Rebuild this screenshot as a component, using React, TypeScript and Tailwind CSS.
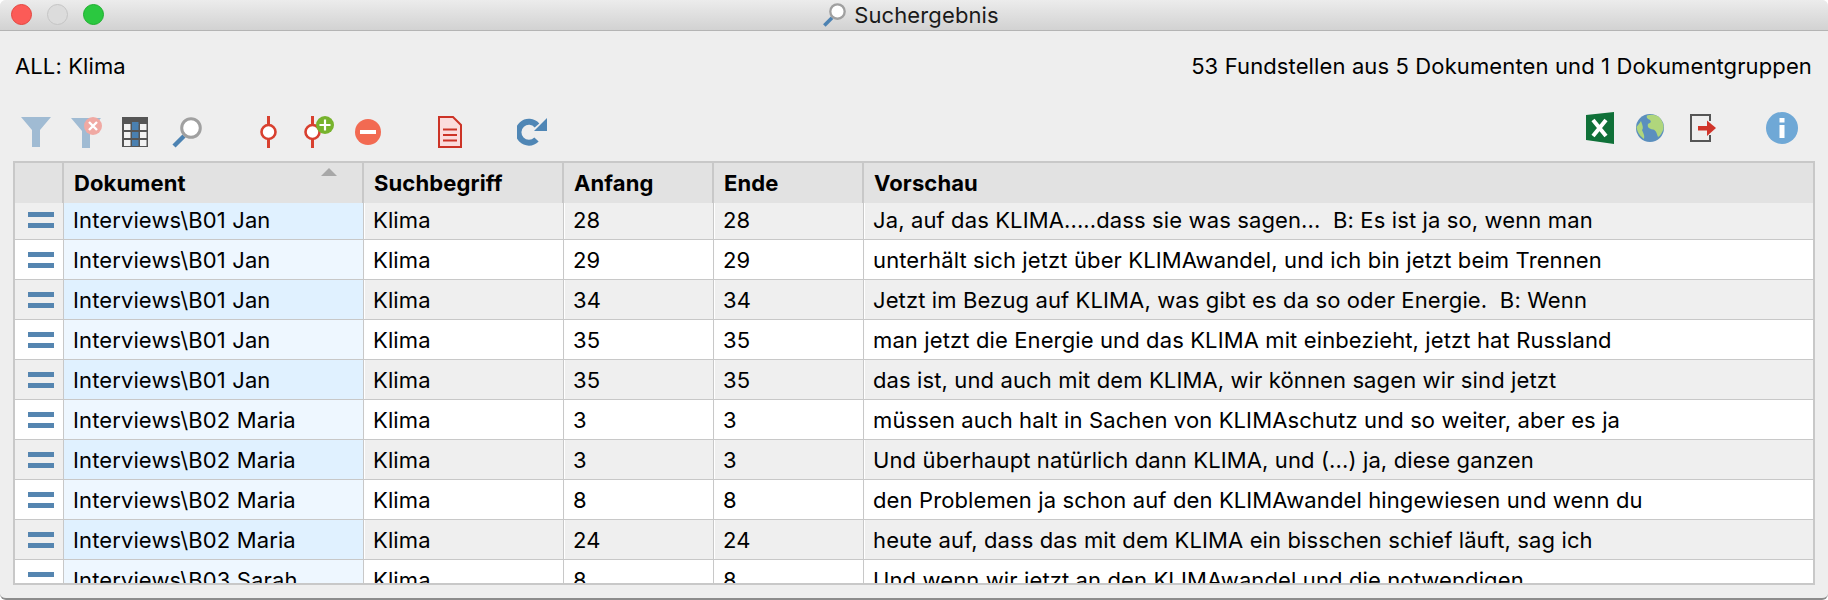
const rows = [
  ["Interviews\\B01 Jan", "28", "Ja, auf das KLIMA.....dass sie was sagen...  B: Es ist ja so, wenn man"],
  ["Interviews\\B01 Jan", "29", "unterhält sich jetzt über KLIMAwandel, und ich bin jetzt beim Trennen"],
  ["Interviews\\B01 Jan", "34", "Jetzt im Bezug auf KLIMA, was gibt es da so oder Energie.  B: Wenn"],
  ["Interviews\\B01 Jan", "35", "man jetzt die Energie und das KLIMA mit einbezieht, jetzt hat Russland"],
  ["Interviews\\B01 Jan", "35", "das ist, und auch mit dem KLIMA, wir können sagen wir sind jetzt"],
  ["Interviews\\B02 Maria", "3", "müssen auch halt in Sachen von KLIMAschutz und so weiter, aber es ja"],
  ["Interviews\\B02 Maria", "3", "Und überhaupt natürlich dann KLIMA, und (...) ja, diese ganzen"],
  ["Interviews\\B02 Maria", "8", "den Problemen ja schon auf den KLIMAwandel hingewiesen und wenn du"],
  ["Interviews\\B02 Maria", "24", "heute auf, dass das mit dem KLIMA ein bisschen schief läuft, sag ich"],
  ["Interviews\\B03 Sarah", "8", "Und wenn wir jetzt an den KLIMAwandel und die notwendigen"],
];

const cols = "grid grid-cols-[49px_300px_200px_150px_150px_1fr]";

function Funnel() {
  return (
    <svg width="30" height="30" viewBox="0 0 30 30">
      <polygon points="0,0 30,0 19,13 19,30 11,30 11,13" fill="#a0bbd3" />
    </svg>
  );
}

function FunnelX() {
  return (
    <svg width="31" height="31" viewBox="0 0 31 31">
      <polygon points="0,1 30,1 19,14 19,31 11,31 11,14" fill="#a0bbd3" />
      <circle cx="22" cy="9" r="9" fill="#f0a9a3" />
      <path d="M18 5l8 8M26 5l-8 8" stroke="#fff" strokeWidth="2.4" />
    </svg>
  );
}

function TableIcon() {
  const xs = [2, 10, 18];
  const ys = [7, 15, 23];
  return (
    <svg width="26" height="30" viewBox="0 0 26 30">
      <rect width="26" height="30" fill="#555" />
      {xs.map((x, i) =>
        ys.map((y) => (
          <rect key={`${x}-${y}`} x={x} y={y} width="6.5" height="6" fill={i === 1 ? "#4a80b0" : "#f2f2f2"} />
        ))
      )}
      <rect x="10" y="5" width="6.5" height="3" fill="#4a80b0" />
    </svg>
  );
}

function Magnifier({ size = 31 }: { size?: number }) {
  return (
    <svg width={size} height={size} viewBox="0 0 31 31">
      <path d="M13 19L3 29" stroke="#4c82b2" strokeWidth="4.5" />
      <circle cx="20" cy="11" r="9.3" fill="#fff" stroke="#a0a0a0" strokeWidth="3" />
    </svg>
  );
}

function Node() {
  return (
    <svg width="17" height="32" viewBox="0 0 17 32">
      <path d="M8.5 0V32" stroke="#d8402f" strokeWidth="3" />
      <circle cx="8.5" cy="16" r="7" fill="#fff" stroke="#d8402f" strokeWidth="2.6" />
    </svg>
  );
}

function NodePlus() {
  return (
    <svg width="30" height="32" viewBox="0 0 30 32">
      <path d="M8.5 0V32" stroke="#d8402f" strokeWidth="3" />
      <circle cx="8.5" cy="16" r="7" fill="#fff" stroke="#d8402f" strokeWidth="2.6" />
      <circle cx="21" cy="9" r="9" fill="#77b32d" />
      <path d="M21 3.5v11M15.5 9h11" stroke="#fff" strokeWidth="2.2" />
    </svg>
  );
}

function Minus() {
  return (
    <svg width="26" height="26" viewBox="0 0 26 26">
      <circle cx="13" cy="13" r="13" fill="#f26a52" />
      <rect x="5" y="11" width="16" height="4" fill="#fff" />
    </svg>
  );
}

function Doc() {
  return (
    <svg width="24" height="32" viewBox="0 0 24 32">
      <path d="M1 1H15L23 9V31H1Z" fill="#fbdcdc" stroke="#cc3326" strokeWidth="2" />
      <path d="M5 13.5H19M5 19H19M5 24.5H19" stroke="#cc3326" strokeWidth="2.2" />
    </svg>
  );
}

function Redo() {
  return (
    <svg width="30" height="32" viewBox="0 0 30 32">
      <path d="M20 9.5A10.5 10.5 0 1 0 19.5 23.5" fill="none" stroke="#4f86b5" strokeWidth="6" />
      <polygon points="30,2 30,15 17,15" fill="#4f86b5" />
    </svg>
  );
}

function Excel() {
  return (
    <svg width="28" height="32" viewBox="0 0 28 32">
      <polygon points="0,3 28,0 28,32 0,28" fill="#0f7038" />
      <path d="M7 8L20 24M20 8L7 24" stroke="#fff" strokeWidth="4" />
    </svg>
  );
}

function Globe() {
  return (
    <svg width="28" height="28" viewBox="0 0 28 28">
      <circle cx="14" cy="14" r="14" fill="#5b8fbe" />
      <path d="M11 1.5C15 0 21 0.5 24 4C26.5 7 28 11 27.5 15C26 19 24 22 22 23C21 20 20 16 17 15.5C13 15 11 13 12 10C14 9 16 8 14 6C12 5 10 4 11 1.5Z" fill="#b0d67c" />
      <path d="M0.5 13C2 11 4 9 5 7C6 10 8 14 6 16C7 19 9 21 8 25C4 22 1 18 0.5 13Z" fill="#b0d67c" />
    </svg>
  );
}

function Exit() {
  return (
    <svg width="26" height="28" viewBox="0 0 26 28">
      <path d="M20 7V1H1V27H20V21" fill="none" stroke="#555" strokeWidth="2" />
      <rect x="8" y="12" width="11" height="4.5" fill="#d0342a" />
      <polygon points="17,6.5 26,14 17,22" fill="#d0342a" />
    </svg>
  );
}

function Info() {
  return (
    <svg width="32" height="32" viewBox="0 0 32 32">
      <circle cx="16" cy="16" r="16" fill="#6fa8d6" />
      <rect x="13.5" y="6" width="5" height="4.5" fill="#fff" />
      <rect x="13.5" y="13" width="5" height="13" fill="#fff" />
    </svg>
  );
}

export default function App() {
  return (
    <div className="h-[600px] w-[1828px] overflow-hidden bg-white font-['Inter',sans-serif] text-[22px] tracking-[0.12px] text-black">
      <div className="flex h-[600px] flex-col overflow-hidden rounded-[6px] border-b-2 border-[#8c8c8c] bg-[#eeeeee]">
        {/* title bar */}
        <div className="relative flex h-[31px] shrink-0 items-center justify-center gap-[8px] border-b border-[#b4b4b4] bg-gradient-to-b from-[#ececec] to-[#d2d2d2] pr-[7px]">
          <div className="absolute left-[11px] top-[4px] flex gap-[15px]">
            <span className="h-[21px] w-[21px] rounded-full border border-[#e2463f] bg-[#fc5b57]" />
            <span className="h-[21px] w-[21px] rounded-full border border-[#c4c4c4] bg-[#dcdcdc]" />
            <span className="h-[21px] w-[21px] rounded-full border border-[#1fae2f] bg-[#2bc840]" />
          </div>
          <Magnifier size={24} />
          <span className="text-[#1a1a1a]">Suchergebnis</span>
        </div>

        {/* query + count */}
        <div className="flex h-[70px] shrink-0 items-center justify-between pl-[15px] pr-[16px]">
          <span>ALL: Klima</span>
          <span>53 Fundstellen aus 5 Dokumenten und 1 Dokumentgruppen</span>
        </div>

        {/* toolbar */}
        <div className="flex h-[60px] shrink-0 items-start justify-between pl-[21px] pr-[30px] pt-[11px]">
          <div className="flex items-center pt-[4px]">
            <Funnel />
            <span className="ml-[20px]"><FunnelX /></span>
            <span className="ml-[20px]"><TableIcon /></span>
            <span className="ml-[23px]"><Magnifier /></span>
            <span className="ml-[58px]"><Node /></span>
            <span className="ml-[27px]"><NodePlus /></span>
            <span className="ml-[21px]"><Minus /></span>
            <span className="ml-[57px]"><Doc /></span>
            <span className="ml-[55px]"><Redo /></span>
          </div>
          <div className="flex items-center">
            <Excel />
            <span className="ml-[22px]"><Globe /></span>
            <span className="ml-[26px]"><Exit /></span>
            <span className="ml-[50px]"><Info /></span>
          </div>
        </div>

        {/* table */}
        <div className="ml-[13px] flex h-[424px] w-[1802px] shrink-0 flex-col overflow-hidden border-2 border-[#c8c8c8] bg-white">
          <div className={`${cols} h-[40px] shrink-0 bg-[#e2e2e2] font-bold`}>
            <div className="border-r-2 border-[#c8c8c8]" />
            <div className="relative flex items-center border-r-2 border-[#c8c8c8] pl-[10px]">
              Dokument
              <svg className="absolute right-[25px] top-[5px]" width="16" height="8" viewBox="0 0 16 8">
                <polygon points="8,0 16,8 0,8" fill="#a8a8a8" />
              </svg>
            </div>
            <div className="flex items-center border-r-2 border-[#c8c8c8] pl-[10px]">Suchbegriff</div>
            <div className="flex items-center border-r-2 border-[#c8c8c8] pl-[10px]">Anfang</div>
            <div className="flex items-center border-r-2 border-[#c8c8c8] pl-[10px]">Ende</div>
            <div className="flex items-center pl-[10px]">Vorschau</div>
          </div>
          <div className="min-h-0 flex-1 overflow-hidden">
            <div className="mt-[-3px]">
              {rows.map((r, i) => {
                const odd = i % 2 === 0;
                const edge = odd ? "shadow-[1px_0_0_#ffffff]" : "";
                return (
                  <div key={i} className={`${cols} h-[40px] border-b border-[#c8c8c8] ${odd ? "bg-[#efefef]" : "bg-white"}`}>
                    <div className="flex flex-col items-center justify-center gap-[6px] border-r border-[#c8c8c8] pl-[3px]">
                      <span className="h-[5px] w-[26px] bg-[#5585b0]" />
                      <span className="h-[5px] w-[26px] bg-[#5585b0]" />
                    </div>
                    <div className={`flex items-center border-r border-[#c8c8c8] pl-[9px] pt-[1px] ${edge} ${odd ? "bg-[#e0f1ff]" : "bg-[#eef7ff]"}`}>{r[0]}</div>
                    <div className={`flex items-center border-r border-[#c8c8c8] pl-[9px] pt-[1px] ${edge}`}>Klima</div>
                    <div className={`flex items-center border-r border-[#c8c8c8] pl-[9px] pt-[1px] ${edge}`}>{r[1]}</div>
                    <div className={`flex items-center border-r border-[#c8c8c8] pl-[9px] pt-[1px] ${edge}`}>{r[1]}</div>
                    <div className="flex items-center whitespace-pre pl-[9px] pt-[1px]">{r[2]}</div>
                  </div>
                );
              })}
            </div>
          </div>
        </div>
      </div>
    </div>
  );
}
